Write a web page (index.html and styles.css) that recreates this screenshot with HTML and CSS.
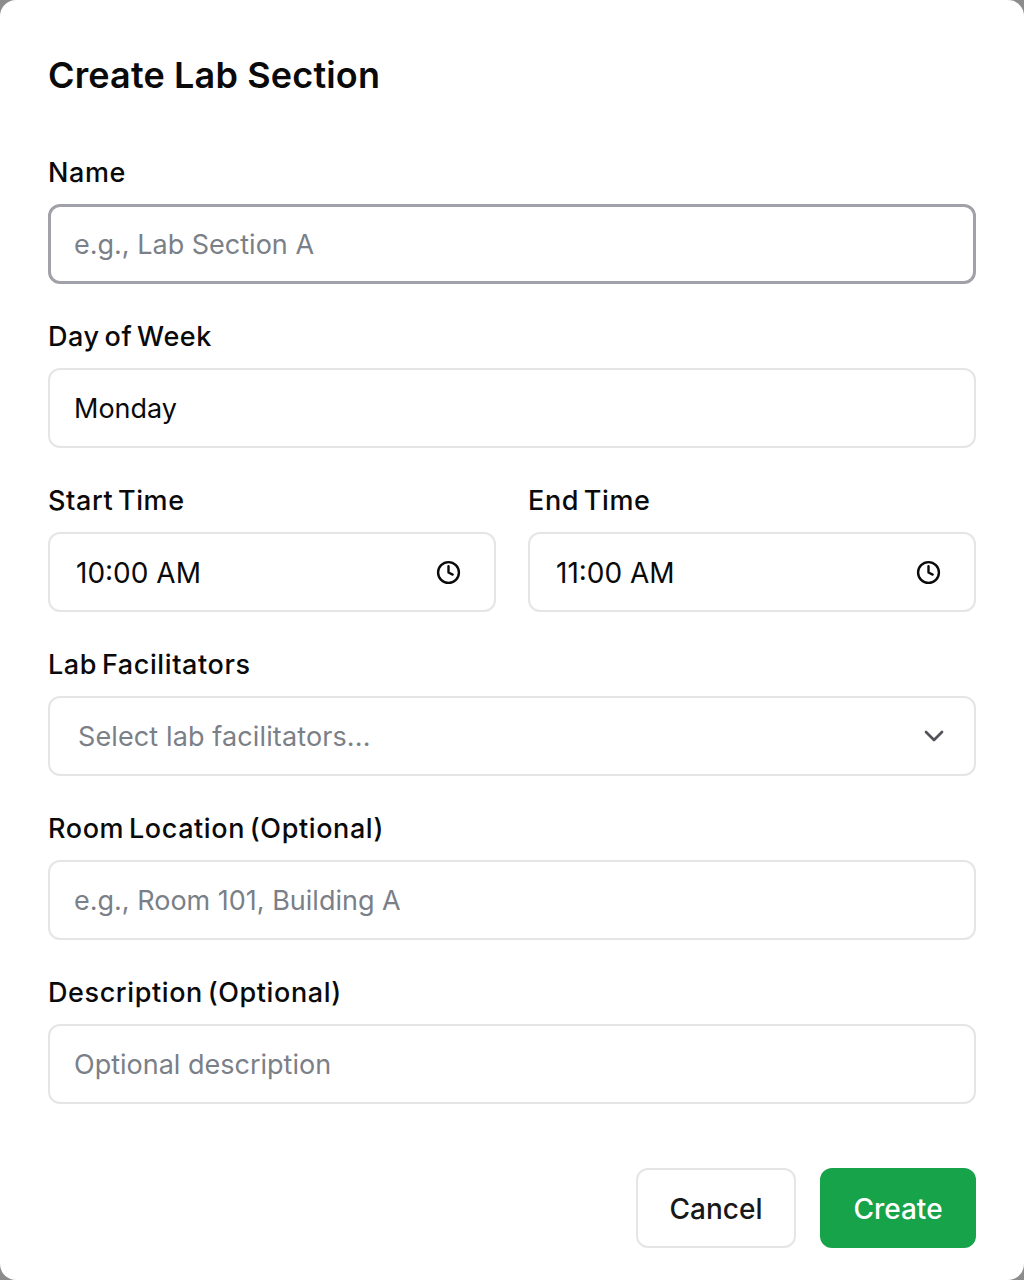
FILE: index.html
```html
<!DOCTYPE html>
<html lang="en">
<head>
<meta charset="utf-8">
<title>Create Lab Section</title>
<link rel="stylesheet" href="styles.css">
</head>
<body>
<form class="dialog">
  <h2 class="title">Create Lab Section</h2>
  <div class="fields">
    <div class="field">
      <label class="label">Name</label>
      <input class="control control-focus" type="text" placeholder="e.g., Lab Section A">
    </div>
    <div class="field">
      <label class="label">Day of Week</label>
      <input class="control" type="text" value="Monday">
    </div>
    <div class="row">
      <div class="field">
        <label class="label">Start Time</label>
        <div class="control control-time">
          <span>10:00 AM</span>
          <svg class="clock" viewBox="0 0 24 24" fill="none" stroke="currentColor" stroke-width="2.3" stroke-linecap="round" stroke-linejoin="round"><circle cx="12" cy="12" r="10"/><path d="M12 6v6l4 2"/></svg>
        </div>
      </div>
      <div class="field">
        <label class="label">End Time</label>
        <div class="control control-time">
          <span>11:00 AM</span>
          <svg class="clock" viewBox="0 0 24 24" fill="none" stroke="currentColor" stroke-width="2.3" stroke-linecap="round" stroke-linejoin="round"><circle cx="12" cy="12" r="10"/><path d="M12 6v6l4 2"/></svg>
        </div>
      </div>
    </div>
    <div class="field">
      <label class="label">Lab Facilitators</label>
      <div class="control control-select">
        <span>Select lab facilitators...</span>
        <svg class="chevron" viewBox="0 0 24 24" fill="none" stroke="currentColor" stroke-width="2" stroke-linecap="round" stroke-linejoin="round"><path d="m6 9 6 6 6-6"/></svg>
      </div>
    </div>
    <div class="field">
      <label class="label">Room Location (Optional)</label>
      <input class="control" type="text" placeholder="e.g., Room 101, Building A">
    </div>
    <div class="field">
      <label class="label">Description (Optional)</label>
      <input class="control" type="text" placeholder="Optional description">
    </div>
  </div>
  <div class="actions">
    <button class="btn btn-cancel" type="button">Cancel</button>
    <button class="btn btn-create" type="button">Create</button>
  </div>
</form>
</body>
</html>
```
FILE: styles.css
```css
* { box-sizing: border-box; }
html, body { margin: 0; height: 1280px; }
body {
  background: #8c8c8c;
  font-family: "Inter", "Liberation Sans", sans-serif;
  overflow: hidden;
}
.dialog {
  display: flex;
  flex-direction: column;
  height: 1280px;
  padding: 48px;
  background: #fff;
  border-radius: 16px;
  color: #0a0a0a;
}
.title {
  margin: 0 0 48px;
  padding-bottom: 2px;
  font-size: 36px;
  line-height: 54px;
  font-weight: 600;
  letter-spacing: 0.15px;
}
.fields { display: flex; flex-direction: column; gap: 32px; }
.field { display: flex; flex-direction: column; gap: 12px; min-width: 0; }
.row { display: grid; grid-template-columns: 1fr 1fr; gap: 32px; }
.label {
  padding-top: 2px;
  font-size: 27px;
  line-height: 38px;
  font-weight: 500;
  letter-spacing: 0.6px;
  word-spacing: -3px;
}
.control {
  width: 100%;
  height: 80px;
  padding: 0 24px;
  border: 2px solid #e5e5e5;
  border-radius: 12px;
  background: #fff;
  color: #0a0a0a;
  font-family: inherit;
  font-size: 27px;
  outline: none;
}
.control::placeholder { color: #7b7f87; opacity: 1; }
.control-focus { border-color: #a1a1aa; border-width: 3px; padding-left: 23px; }
.control-time, .control-select { display: flex; align-items: center; justify-content: space-between; }
.control-time { padding: 2px 33px 0 26px; font-size: 28px; }
.control-select { padding: 0 24px 0 28px; color: #7b7f87; letter-spacing: 0.12px; }
.clock { width: 25px; height: 25px; margin-top: -2px; color: #0a0a0a; }
.chevron { width: 32px; height: 32px; color: #52525b; }
.actions { display: flex; justify-content: flex-end; gap: 24px; margin-top: 64px; }
.btn {
  height: 80px;
  padding-top: 2px;
  border-radius: 12px;
  font-family: inherit;
  font-size: 28px;
  font-weight: 500;
}
.btn-cancel { width: 160px; background: #fff; border: 2px solid #e5e5e5; color: #18181b; }
.btn-create { width: 156px; background: #16a34a; border: 0; color: #fff; }
```
